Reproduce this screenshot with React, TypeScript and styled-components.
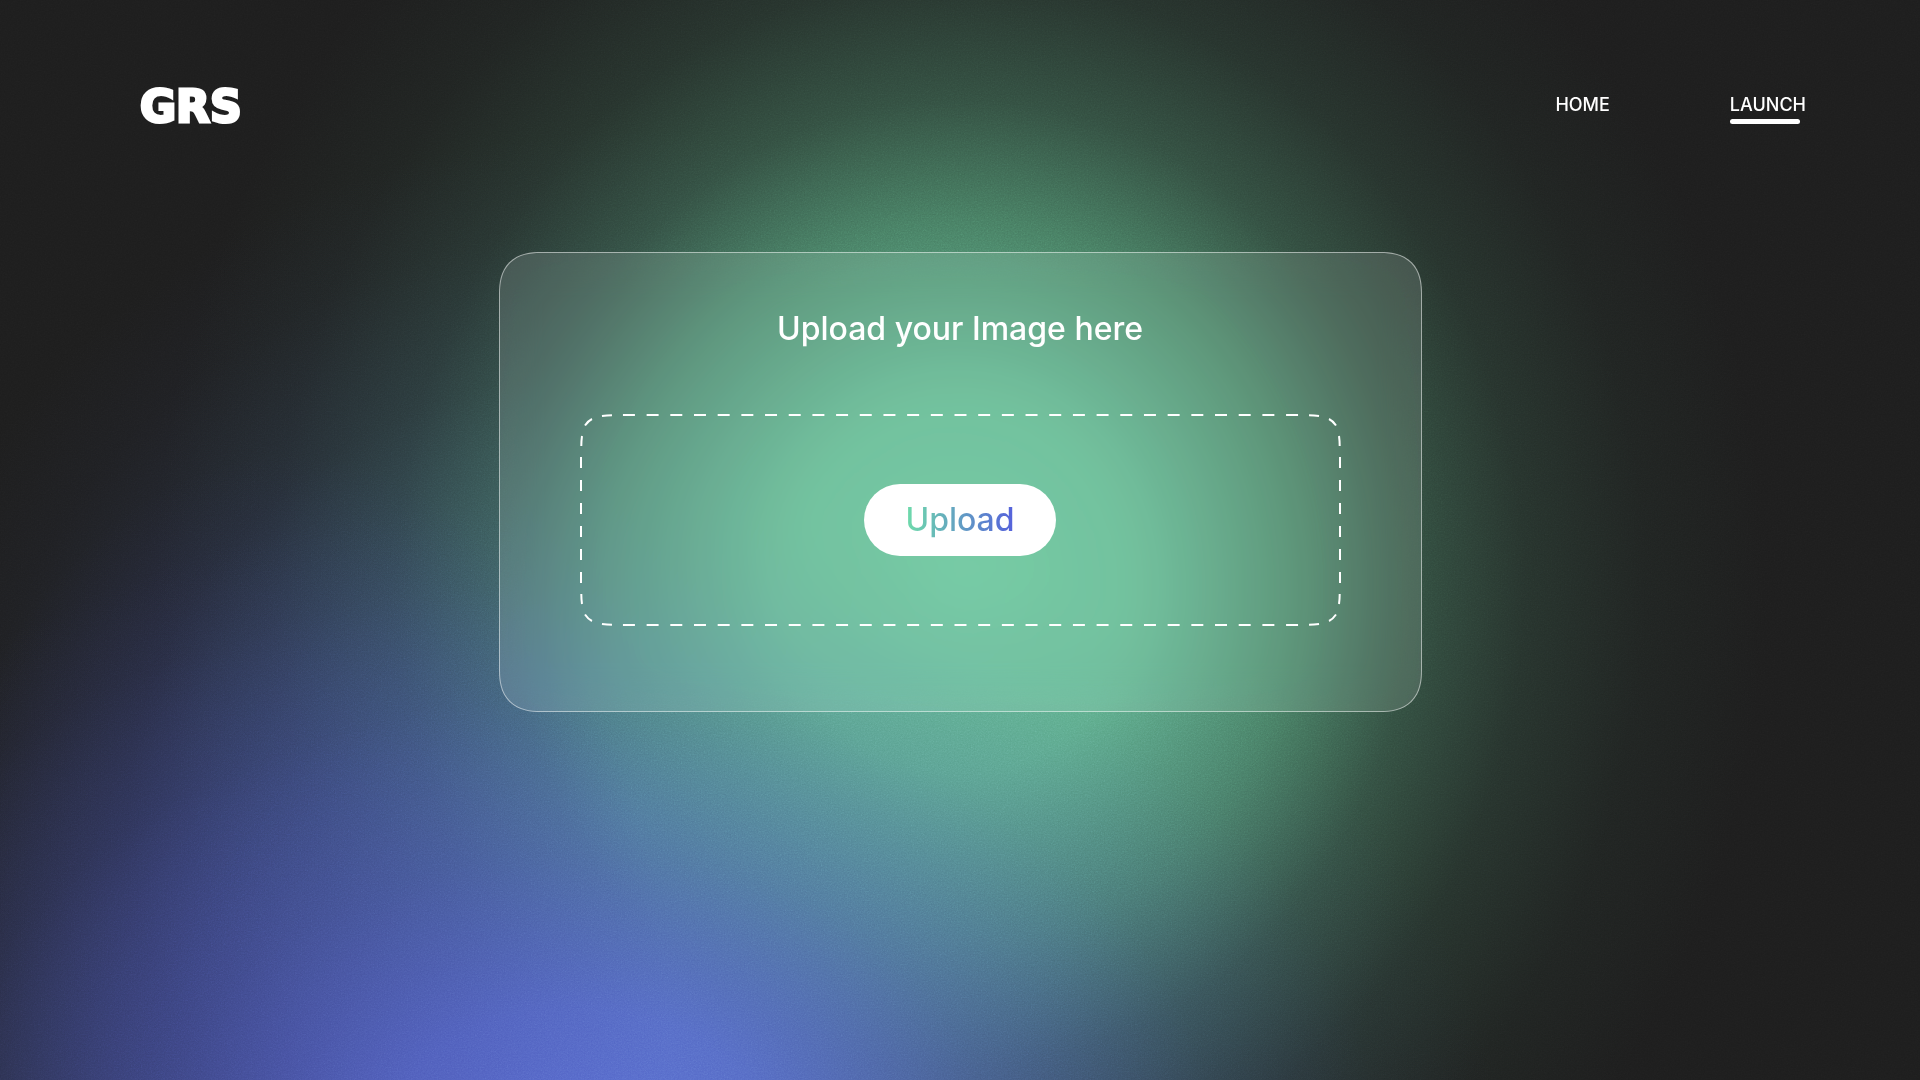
import React from "react";
import styled, { createGlobalStyle } from "styled-components";

const GlobalStyle = createGlobalStyle`
  *, *::before, *::after { box-sizing: border-box; }
  body { margin: 0; background: #1d1d1d; }
`;

const Page = styled.div`
  position: relative;
  isolation: isolate;
  min-height: 100vh;
  display: flex;
  flex-direction: column;
  overflow: hidden;
  color: #fff;
  font-family: Inter, "Liberation Sans", sans-serif;
  background:
    radial-gradient(ellipse 20% 56% at 15% 98%, rgba(64, 60, 160, 0.28) 0%, rgba(62, 60, 155, 0.22) 45%, rgba(60, 58, 150, 0.09) 78%, rgba(60, 58, 150, 0) 100%),
    radial-gradient(ellipse 48% 60% at 30% 106%, rgba(90, 110, 214, 1) 0%, rgba(88, 108, 208, 0.9) 21%, rgba(82, 102, 192, 0.52) 45%, rgba(72, 90, 168, 0.21) 69%, rgba(66, 78, 140, 0.06) 87%, rgba(66, 76, 140, 0) 100%),
    radial-gradient(ellipse 42% 80% at 50% 54%, rgba(101, 191, 148, 1) 0%, rgba(98, 185, 143, 0.95) 22%, rgba(88, 164, 126, 0.7) 42%, rgba(76, 136, 106, 0.46) 56%, rgba(68, 120, 94, 0.24) 70%, rgba(64, 112, 88, 0.08) 85%, rgba(60, 110, 85, 0) 100%),
    radial-gradient(ellipse 40% 64% at 33% 76%, rgba(82, 130, 180, 0.8) 0%, rgba(76, 112, 166, 0.5) 36%, rgba(62, 84, 140, 0.2) 66%, rgba(60, 78, 140, 0.05) 86%, rgba(60, 78, 140, 0) 100%),
    #1d1d1d;
`;

const Grain = styled.svg`
  position: absolute;
  inset: 0;
  z-index: -1;
  width: 100%;
  height: 100%;
  opacity: 0.28;
  mix-blend-mode: overlay;
  pointer-events: none;
`;

const Header = styled.header`
  display: flex;
  justify-content: space-between;
  align-items: flex-end;
  padding: 0 114px 0 140px;
  height: 132px;
`;

const Logo = styled.a`
  color: #fff;
  text-decoration: none;
  font: 700 44px/50px "DejaVu Sans", sans-serif;
  -webkit-text-stroke: 3px #fff;
`;

const Nav = styled.nav`
  display: flex;
  gap: 120px;
  padding-bottom: 15px;
`;

const NavLink = styled.a<{ $active?: boolean }>`
  position: relative;
  color: #fff;
  text-decoration: none;
  font-size: 18px;
  font-weight: 500;
  line-height: 24px;

  &::after {
    content: "";
    display: ${(p) => (p.$active ? "block" : "none")};
    position: absolute;
    left: 0;
    top: 26px;
    width: 70px;
    height: 5px;
    border-radius: 3px;
    background: #fff;
  }
`;

const Main = styled.main`
  flex: 1;
  display: flex;
  justify-content: center;
  align-items: flex-start;
  padding: 120px 24px 80px;
`;

const Card = styled.section`
  width: 50%;
  max-width: 923px;
  min-width: 480px;
  padding: 56px 80px 85px;
  display: flex;
  flex-direction: column;
  gap: 65px;
  border: 1px solid rgba(255, 255, 255, 0.5);
  border-radius: 42px;
  corner-shape: superellipse(1.3);
  background: rgba(255, 255, 255, 0.13);
  backdrop-filter: blur(20px) saturate(1.12);
`;

const Title = styled.h1`
  margin: 0;
  text-align: center;
  font-size: 32px;
  font-weight: 500;
  line-height: 40px;
`;

const DropZone = styled.div`
  position: relative;
  display: flex;
  justify-content: center;
  align-items: center;
  padding: 70px 24px;
`;

const Dashes = styled.svg`
  position: absolute;
  inset: 0;
  width: 100%;
  height: 100%;
  fill: none;
  stroke: #fff;
  stroke-width: 2;
`;

const UploadButton = styled.button`
  min-width: 192px;
  height: 72px;
  padding: 0 40px;
  border: 0;
  border-radius: 36px;
  background: #fff;
  font: 500 32px/40px Inter, "Liberation Sans", sans-serif;
  cursor: pointer;
`;

const GradientText = styled.span`
  color: transparent;
  background: linear-gradient(90deg, #6fdcaa, #5560dc);
  background-clip: text;
  -webkit-background-clip: text;
`;

const corners = [
  "",
  "translate(762 0) scale(-1 1)",
  "translate(0 212) scale(1 -1)",
  "translate(762 212) scale(-1 -1)",
];

function DashedFrame() {
  return (
    <Dashes viewBox="0 0 762 212" preserveAspectRatio="none" aria-hidden="true">
      <path d="M43 1H719M43 211H719" strokeDasharray="12 11.714" />
      <path d="M1 43V169M761 43V169" strokeDasharray="11 12" />
      {corners.map((transform) => (
        <path key={transform} transform={transform} d="M22 1.9 Q27 1.3 32 1.2M5 11.5Q8 7 12 5M1.3 32Q1.3 27 2 22" />
      ))}
    </Dashes>
  );
}

export default function App() {
  return (
    <Page>
      <GlobalStyle />
      <Grain aria-hidden="true">
        <filter id="grain">
          <feTurbulence type="fractalNoise" baseFrequency="0.7" numOctaves="2" />
          <feColorMatrix type="saturate" values="0" />
        </filter>
        <rect width="100%" height="100%" filter="url(#grain)" />
      </Grain>
      <Header>
        <Logo href="#">GRS</Logo>
        <Nav>
          <NavLink href="#home">HOME</NavLink>
          <NavLink href="#launch" $active aria-current="page">LAUNCH</NavLink>
        </Nav>
      </Header>
      <Main>
        <Card>
          <Title>Upload your Image here</Title>
          <DropZone>
            <DashedFrame />
            <UploadButton type="button">
              <GradientText>Upload</GradientText>
            </UploadButton>
          </DropZone>
        </Card>
      </Main>
    </Page>
  );
}
